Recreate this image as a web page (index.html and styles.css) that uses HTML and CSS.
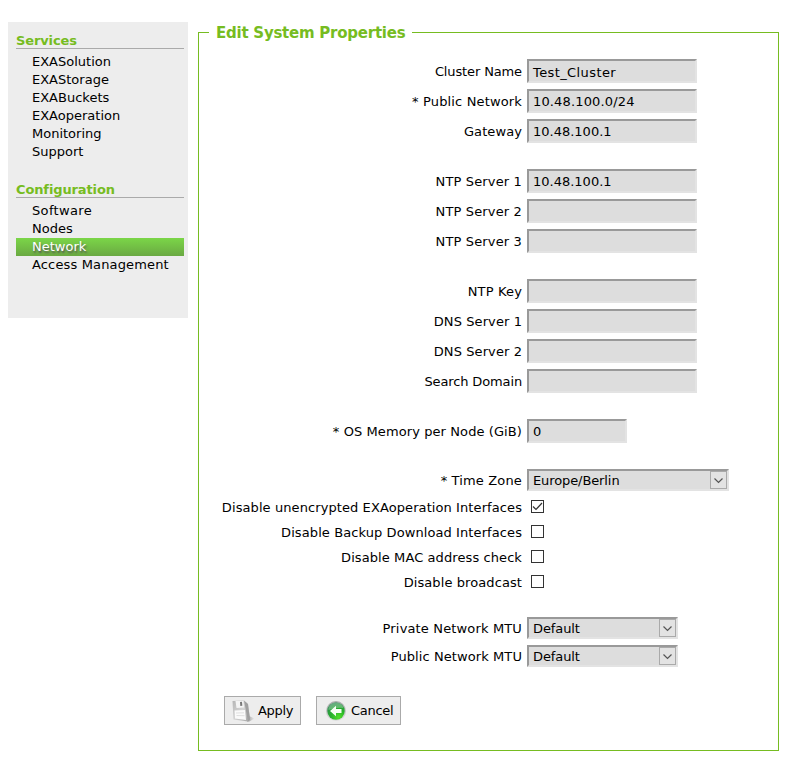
FILE: index.html
```html
<!DOCTYPE html>
<html lang="en">
<head>
<meta charset="utf-8">
<title>Edit System Properties</title>
<link rel="stylesheet" href="styles.css">
</head>
<body>
<nav class="sidebar">
  <h2>Services</h2>
  <ul>
    <li>EXASolution</li>
    <li>EXAStorage</li>
    <li>EXABuckets</li>
    <li>EXAoperation</li>
    <li>Monitoring</li>
    <li>Support</li>
  </ul>
  <h2>Configuration</h2>
  <ul>
    <li class="loose">Software</li>
    <li>Nodes</li>
    <li class="active">Network</li>
    <li class="airy">Access Management</li>
  </ul>
</nav>
<main class="panel">
  <h1><span>Edit System Properties</span></h1>
  <form>
    <div class="row"><label class="tight">Cluster Name</label><div class="field low">Test_Cluster</div></div>
    <div class="row"><label class="airy">* Public Network</label><div class="field airy">10.48.100.0/24</div></div>
    <div class="row"><label>Gateway</label><div class="field">10.48.100.1</div></div>
    <div class="row group"><label class="airy">NTP Server 1</label><div class="field">10.48.100.1</div></div>
    <div class="row"><label class="airy">NTP Server 2</label><div class="field"></div></div>
    <div class="row"><label class="airy">NTP Server 3</label><div class="field"></div></div>
    <div class="row group"><label class="airy">NTP Key</label><div class="field"></div></div>
    <div class="row"><label>DNS Server 1</label><div class="field"></div></div>
    <div class="row"><label>DNS Server 2</label><div class="field"></div></div>
    <div class="row"><label class="tight">Search Domain</label><div class="field"></div></div>
    <div class="row group"><label>* OS Memory per Node (GiB)</label><div class="field short">0</div></div>
    <div class="row pick zone"><label class="airy">* Time Zone</label><div class="field select wide"><span>Europe/Berlin</span><svg class="arrow" viewBox="0 0 17 18"><rect x=".5" y=".5" width="16" height="17"/><path d="M4.500 7.500l4 4 4-4"/></svg></div></div>
    <div class="row check"><label>Disable unencrypted EXAoperation Interfaces</label><svg class="box" viewBox="0 0 13 13"><rect x=".5" y=".5" width="12" height="12"/><path d="M2 6.500l3 3 6-6.500"/></svg></div>
    <div class="row check"><label>Disable Backup Download Interfaces</label><svg class="box" viewBox="0 0 13 13"><rect x=".5" y=".5" width="12" height="12"/></svg></div>
    <div class="row check"><label>Disable MAC address check</label><svg class="box" viewBox="0 0 13 13"><rect x=".5" y=".5" width="12" height="12"/></svg></div>
    <div class="row check"><label>Disable broadcast</label><svg class="box" viewBox="0 0 13 13"><rect x=".5" y=".5" width="12" height="12"/></svg></div>
    <div class="row pick mtu"><label class="airy">Private Network MTU</label><div class="field select"><span>Default</span><svg class="arrow" viewBox="0 0 17 18"><rect x=".5" y=".5" width="16" height="17"/><path d="M4.500 7.500l4 4 4-4"/></svg></div></div>
    <div class="row pick"><label>Public Network MTU</label><div class="field select"><span>Default</span><svg class="arrow" viewBox="0 0 17 18"><rect x=".5" y=".5" width="16" height="17"/><path d="M4.500 7.500l4 4 4-4"/></svg></div></div>
    <div class="actions">
      <button type="button" class="apply"><svg viewBox="0 0 24 24">
        <defs>
          <linearGradient id="metal" x1="0" y1="0" x2="1" y2="1"><stop offset="0" stop-color="#b5b5b5"/><stop offset=".5" stop-color="#d4d4d4"/><stop offset="1" stop-color="#a4a4a4"/></linearGradient>
          <linearGradient id="shade"><stop offset="0" stop-color="#999"/><stop offset="1" stop-color="#ededed"/></linearGradient>
        </defs>
        <path d="M16 22.500l1-6 6.500 3-5 3z" fill="url(#shade)"/>
        <path d="M1.500 2l11.500-.5 4 3.500 2 15.500-2 2-14.500-2z" fill="url(#metal)"/>
        <path d="M13 1.500l4 3.500 2 15.500-2 2z" fill="#a0a0a0"/>
        <path d="M4.500 2h8l.5 6.500-7.500.5z" fill="#f4f4f4"/>
        <path d="M9 3l2-.2.3 4-2 .2z" fill="#777"/>
        <path d="M3.500 11.500l10.500-.5 1 10-11-1.500z" fill="#fafafa"/>
        <path d="M5 14l8-.2M5.500 16.500l8 .2" stroke="#d8d8d8" stroke-width=".8"/>
      </svg><span>Apply</span></button>
      <button type="button" class="cancel"><svg viewBox="0 0 24 24">
        <defs>
          <radialGradient id="orb" cx=".65" cy=".85" r=".85"><stop offset="0" stop-color="#50e028"/><stop offset=".5" stop-color="#27b22a"/><stop offset="1" stop-color="#2b8a50"/></radialGradient>
          <linearGradient id="rim" x1="0" y1="0" x2="0" y2="1"><stop offset="0" stop-color="#aaa"/><stop offset="1" stop-color="#ddd"/></linearGradient>
        </defs>
        <circle cx="12" cy="12" r="10" fill="url(#rim)"/>
        <circle cx="12" cy="12" r="8.700" fill="url(#orb)"/>
        <path d="M4.500 9a7.700 7.200 0 0 1 15 0q-7-1-15 2z" fill="#fff" opacity=".28"/>
        <path d="M6 12l6-5.200v3.200h5.500v4H12v3.200z" fill="#f6fff4"/>
      </svg><span>Cancel</span></button>
    </div>
  </form>
</main>
</body>
</html>
```
FILE: styles.css
```css
* { box-sizing: border-box; }
body {
  margin: 0;
  padding: 22px 21px 0 8px;
  display: flex;
  align-items: flex-start;
  gap: 10px;
  background: #fff;
  color: #000;
  font: 13px/18px Verdana, "DejaVu Sans", sans-serif;
}
.sidebar {
  width: 180px;
  height: 296px;
  padding: 10px 4px 0 8px;
  background: #ededed;
}
.sidebar h2 {
  height: 17px;
  margin: 0 0 4px;
  border-bottom: 1px solid #aaa;
  color: #76bc21;
  font-size: 13px;
  line-height: 17px;
  letter-spacing: -.12px;
}
.sidebar ul { margin: 0 0 20px; padding: 0; list-style: none; }
.sidebar li { height: 18px; padding-left: 16px; line-height: 17px; }
.sidebar .active {
  background: linear-gradient(#7bd648, #6aa942);
  color: #fff;
  text-shadow: 1px 2px 2px #555;
}
.panel {
  width: 581px;
  height: 719px;
  margin-top: 10px;
  border: 1px solid #76bc21;
}
h1 {
  height: 20px;
  margin: -11px 0 0 10px;
  font-size: 15px;
  line-height: 22px;
  letter-spacing: -.24px;
  color: #76bc21;
}
h1 span { display: inline-block; width: 203px; padding-left: 7px; background: #fff; white-space: nowrap; }
form { padding-top: 17px; }
.row {
  display: grid;
  grid-template-columns: 323px 1fr;
  column-gap: 5px;
  height: 24px;
  margin-bottom: 6px;
}
.row label { text-align: right; line-height: 25px; white-space: nowrap; letter-spacing: .09px; }
.group { margin-top: 26px; }
.row .airy, .airy { letter-spacing: .15px; }
.row .tight { letter-spacing: -.13px; }
.loose { letter-spacing: .35px; }
.field {
  width: 170px;
  height: 24px;
  padding-left: 4px;
  border: 2px solid;
  border-color: #999 #e3e3e3 #e3e3e3 #999;
  background: #ddd;
  line-height: 21px;
}
.low { line-height: 23px; letter-spacing: .4px; }
.short { width: 100px; }
.pick { height: 22px; }
.row.pick label { line-height: 23px; }
.select {
  display: flex;
  justify-content: space-between;
  width: 151px;
  height: 22px;
  line-height: 19px;
  letter-spacing: -.1px;
}
.wide { width: 202px; }
.arrow { width: 17px; height: 18px; flex: none; }
.arrow rect { fill: #e3e3e3; stroke: #aaa; }
.arrow path { fill: none; stroke: #555; stroke-width: 1.2; }
.zone { margin: 26px 0 0; }
.check { height: 25px; margin: 0; }
.zone + .check { margin-top: 4px; }
.box { width: 13px; height: 13px; margin: 5px 0 0 4px; }
.box rect { fill: #fff; stroke: #333; }
.box path { fill: none; stroke: #333; stroke-width: 1.2; }
.mtu { margin-top: 22px; }
.actions { display: flex; gap: 15px; margin: 29px 0 0 25px; }
button {
  display: flex;
  align-items: center;
  height: 29px;
  padding: 0;
  border: 1px solid #aaa;
  background: #ededed;
  color: #000;
  font: inherit;
  letter-spacing: -.3px;
}
button svg { width: 24px; height: 24px; flex: none; }
.apply { width: 77px; padding-left: 6px; gap: 3px; }
.cancel { width: 85px; padding-left: 7px; gap: 3px; }
```
